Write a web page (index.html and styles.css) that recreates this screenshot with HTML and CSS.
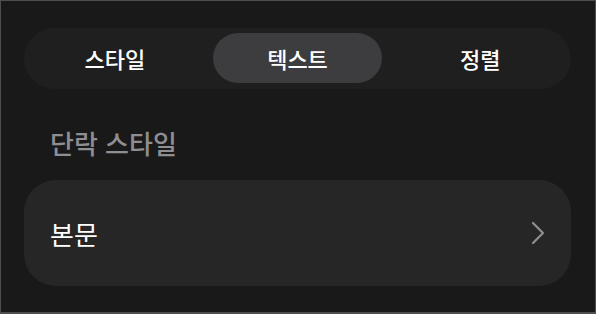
FILE: index.html
```html
<!DOCTYPE html>
<html lang="ko">
<head>
  <meta charset="UTF-8" />
  <meta name="viewport" content="width=device-width, initial-scale=1.0" />
  <title>텍스트 서식</title>
  <link rel="stylesheet" href="styles.css">
</head>
<body>
  <div class="panel">
    <div class="tabs">
      <button class="tab">스타일</button>
      <button class="tab active">텍스트</button>
      <button class="tab">정렬</button>
    </div>
    <div class="section-title">단락 스타일</div>
    <div class="row">
      <span class="row-label">본문</span>
      <svg class="chevron" width="14" height="24" viewBox="0 0 14 24">
        <path d="M2 2 L12 12 L2 22" fill="none" stroke="#8e8e93" stroke-width="2.2" stroke-linecap="round" stroke-linejoin="round"/>
      </svg>
    </div>
  </div>
</body>
</html>
```

FILE: styles.css
```css
* { box-sizing: border-box; margin: 0; padding: 0; }
html, body { height: 100%; }
body
{
  background: #191919;
  font-family: "Noto Sans CJK KR", "Noto Sans", sans-serif;
  color: #fff;
}
.panel
{
  height: 100%;
  border: 1px solid #4e4e4e;
  border-bottom-width: 2px;
  padding: 27px 24px 0 23px;
}
.tabs
{
  display: flex;
  gap: 13px;
  padding: 5px 6px 6px;
  background: #1f1f1f;
  border-radius: 31px;
}
.tab
{
  flex: 1;
  height: 50px;
  border: none;
  background: none;
  color: #fff;
  font-family: inherit;
  font-size: 22px;
  font-weight: 500;
  border-radius: 25px;
}
.tab.active { background: #3d3d3f; }
.section-title
{
  margin: 39px 0 0 26px;
  font-size: 26px;
  line-height: 30px;
  font-weight: 500;
  color: #8e8e93;
}
.row
{
  margin-top: 22px;
  height: 106px;
  display: flex;
  align-items: center;
  justify-content: space-between;
  padding: 0 26px 0 26px;
  background: #262626;
  border-radius: 32px;
}
.row-label
{
  font-size: 26px;
  font-weight: 400;
}
.chevron { display: block; }
```
